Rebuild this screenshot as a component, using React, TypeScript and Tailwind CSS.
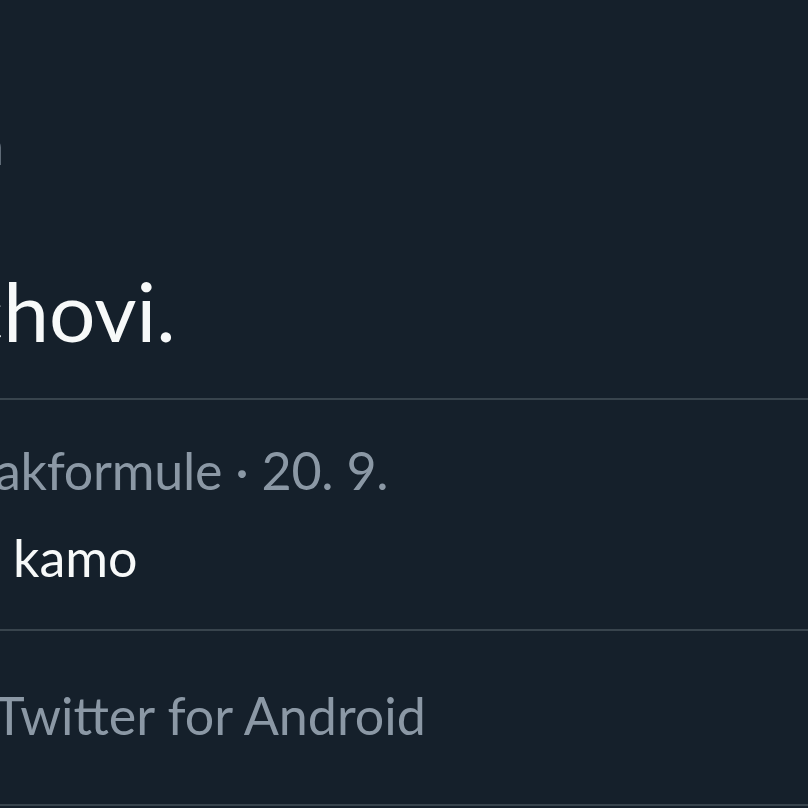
import React from 'react';

const font = { fontFamily: 'Lato, "Noto Sans", sans-serif' };

export default function App() {
  return (
    <div className="w-[808px] h-[808px] bg-[#15202b] overflow-hidden flex flex-col" style={font}>
      {/* tweet body */}
      <div className="h-[398px] flex flex-col">
        <div className="pt-[110px] text-[54px] leading-[70px] text-[#8b98a5] -ml-[26px] whitespace-nowrap">n</div>
        <div className="pt-[80px] text-[82px] leading-[100px] text-[#f7f9f9] -ml-[36px] whitespace-nowrap">chovi.</div>
      </div>
      <div className="h-[2px] bg-[#38444d]" />

      {/* quoted reply */}
      <div className="h-[229px] flex flex-col">
        <div className="pt-[35px] text-[52px] leading-[70px] tracking-[-0.005em] text-[#8b98a5] -ml-[5px] whitespace-nowrap">
          akformule · 20. 9.
        </div>
        <div className="pt-[17px] text-[52px] leading-[70px] text-[#f7f9f9] pl-[13px] whitespace-nowrap">kamo</div>
      </div>
      <div className="h-[2px] bg-[#38444d]" />

      {/* source */}
      <div className="h-[173px] flex flex-col">
        <div className="pt-[49px] text-[52px] leading-[70px] text-[#8b98a5] -ml-[6px] whitespace-nowrap">
          Twitter for Android
        </div>
      </div>
      <div className="h-[2px] bg-[#38444d]" />
    </div>
  );
}
